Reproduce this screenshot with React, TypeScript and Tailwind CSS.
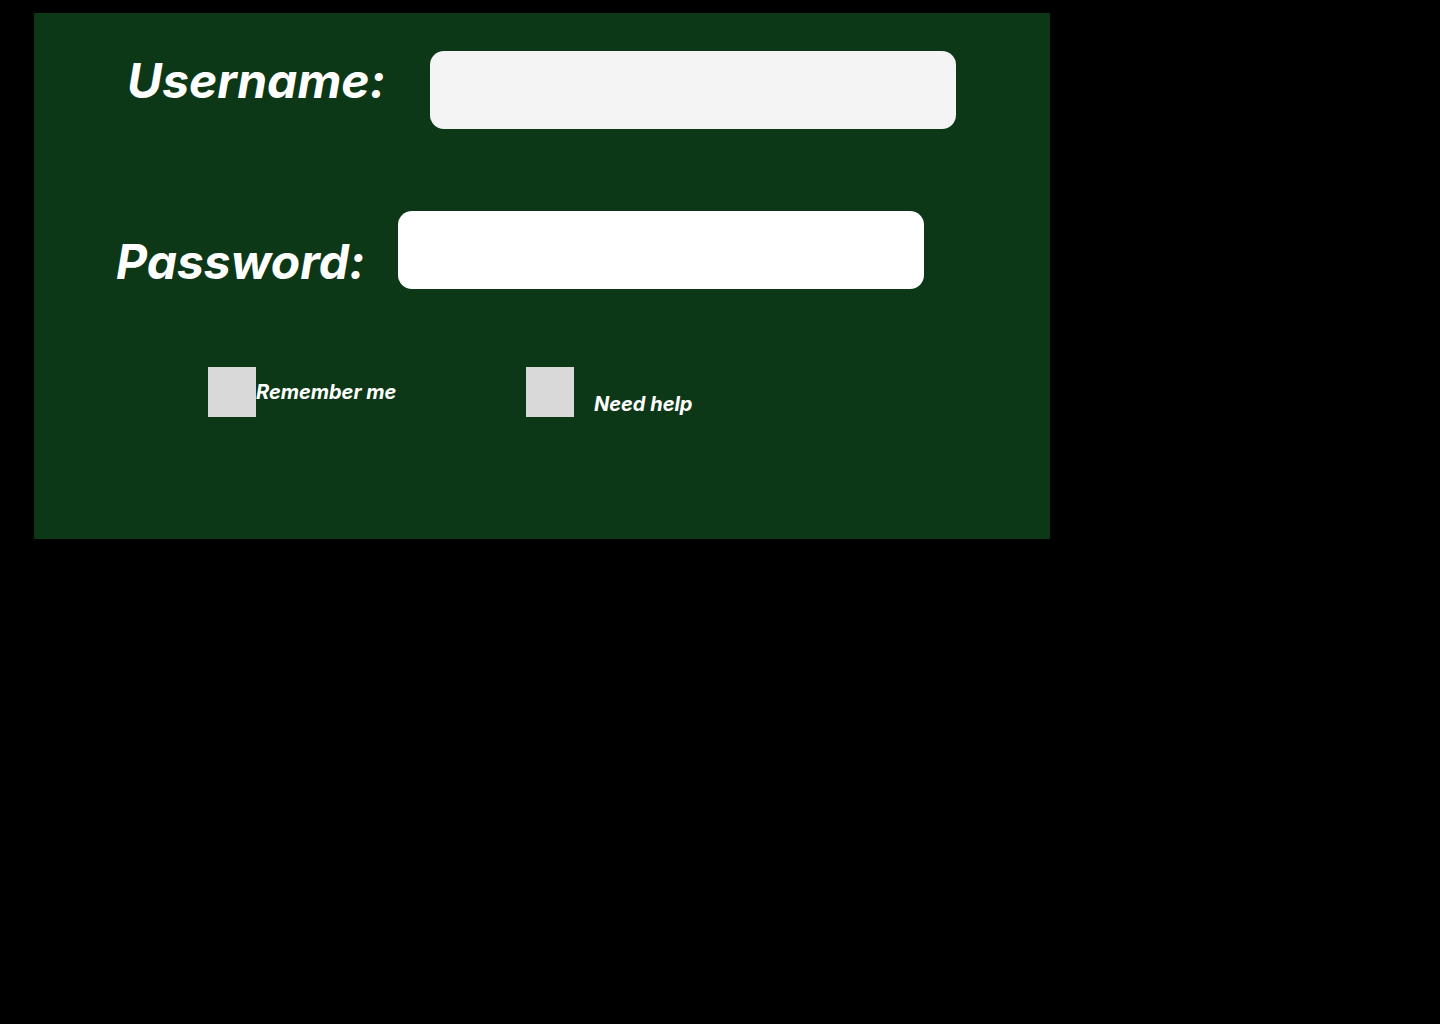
export default function App() {
  return (
    <div className="min-h-[1024px] w-full bg-black pt-[13px] pl-[34px]" style={{ fontFamily: 'Inter, "Noto Sans", sans-serif' }}>
      <div className="w-[1016px] h-[526px] bg-[#0d3817] flex flex-col">
        <div className="flex items-start mt-[38px]">
          <div className="ml-[93px] mt-[1px] w-[303px] text-white italic font-bold text-[48px] leading-[58px]">Username:</div>
          <input className="w-[526px] h-[78px] rounded-[14px] bg-[#f4f4f4] outline-none" />
        </div>
        <div className="flex items-start mt-[82px] h-[78px]">
          <div className="ml-[82px] mt-[22px] w-[282px] text-white italic font-bold text-[48px] leading-[58px]">Password:</div>
          <input type="password" className="w-[526px] h-[78px] rounded-[14px] bg-white outline-none" />
        </div>
        <div className="flex items-start mt-[78px]">
          <div className="ml-[174px] w-[48px] h-[50px] bg-[#d9d9d9]" />
          <div className="mt-[13px] w-[270px] text-white italic font-bold text-[20px] leading-[24px]">Remember me</div>
          <div className="w-[48px] h-[50px] bg-[#d9d9d9]" />
          <div className="ml-[20px] mt-[25px] text-white italic font-bold text-[20px] leading-[24px]">Need help</div>
        </div>
      </div>
    </div>
  );
}
